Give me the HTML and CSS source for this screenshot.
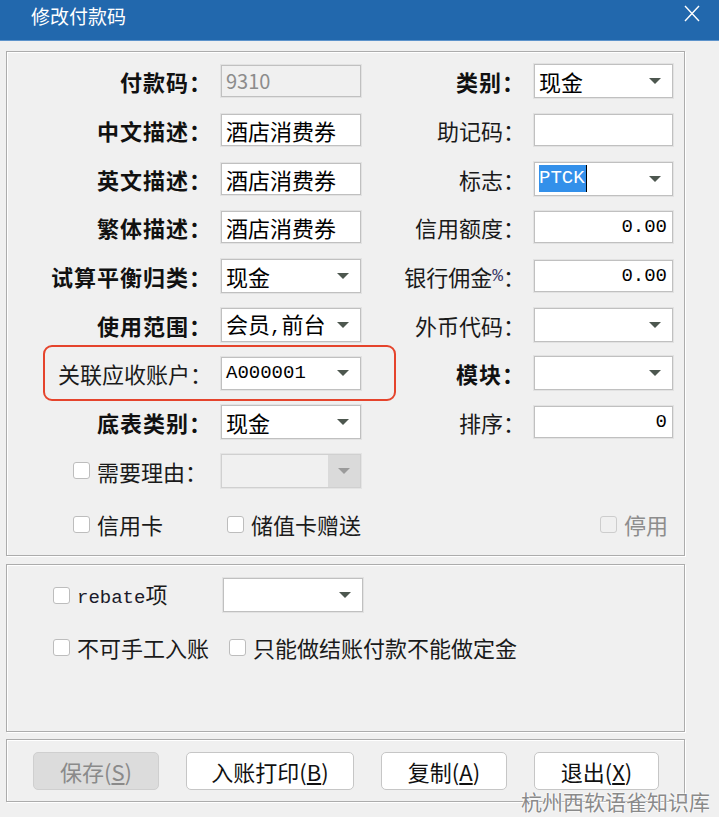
FILE: index.html
```html
<!DOCTYPE html>
<html lang="zh-CN">
<head>
<meta charset="utf-8">
<title>修改付款码</title>
<link rel="stylesheet" href="styles.css">
</head>
<body>
<div class="window">
  <div class="titlebar">
    <span class="title">修改付款码</span>
    <svg class="close" width="16" height="17" viewBox="0 0 16 17"><path d="M1 1 L15 16 M15 1 L1 16" stroke="#fff" stroke-width="1.4" fill="none"/></svg>
  </div>
  <div class="content">
    <section class="group main">
      <div class="label b">付款码：</div>
      <div class="field input disabled"><span class="num">9310</span></div>
      <div class="label b">类别：</div>
      <div class="field select tall"><span>现金</span><i class="arrow"></i></div>

      <div class="label b">中文描述：</div>
      <div class="field input"><span>酒店消费券</span></div>
      <div class="label">助记码：</div>
      <div class="field input"></div>

      <div class="label b">英文描述：</div>
      <div class="field input"><span>酒店消费券</span></div>
      <div class="label">标志：</div>
      <div class="field select tall"><span class="mono sel">PTCK</span><span class="caret"></span><i class="arrow"></i></div>

      <div class="label b">繁体描述：</div>
      <div class="field input"><span>酒店消费券</span></div>
      <div class="label">信用额度：</div>
      <div class="field input right"><span class="mono">0.00</span></div>

      <div class="label b">试算平衡归类：</div>
      <div class="field select tall"><span>现金</span><i class="arrow"></i></div>
      <div class="label">银行佣金<span class="pct">%</span>：</div>
      <div class="field input right"><span class="mono">0.00</span></div>

      <div class="label b">使用范围：</div>
      <div class="field select tall"><span>会员<span class="mono">,</span>前台</span><i class="arrow"></i></div>
      <div class="label">外币代码：</div>
      <div class="field select tall"><span></span><i class="arrow"></i></div>

      <div class="label">关联应收账户：</div>
      <div class="field select"><span class="mono">A000001</span><i class="arrow"></i></div>
      <div class="label b">模块：</div>
      <div class="field select tall"><span></span><i class="arrow"></i></div>

      <div class="label b">底表类别：</div>
      <div class="field select tall"><span>现金</span><i class="arrow"></i></div>
      <div class="label">排序：</div>
      <div class="field input right"><span class="mono">0</span></div>

      <div class="label cbl"><span class="cb"></span><span>需要理由：</span></div>
      <div class="field select tall off"><span></span><span class="dbtn"><i class="arrow"></i></span></div>
      <div></div>
      <div></div>

      <div class="checks">
        <label class="check"><span class="cb"></span><span>信用卡</span></label>
        <label class="check"><span class="cb"></span><span>储值卡赠送</span></label>
        <label class="check dim"><span class="cb"></span><span>停用</span></label>
      </div>

      <div class="highlight"></div>
    </section>

    <section class="group options">
      <div class="orow">
        <label class="check w170"><span class="cb"></span><span><span class="mono">rebate</span>项</span></label>
        <div class="field select tall w140"><span></span><i class="arrow"></i></div>
      </div>
      <div class="orow second">
        <label class="check w176"><span class="cb"></span><span>不可手工入账</span></label>
        <label class="check"><span class="cb"></span><span>只能做结账付款不能做定金</span></label>
      </div>
    </section>

    <section class="group actions">
      <button class="btn w126 disabled">保存(<u>S</u>)</button>
      <button class="btn w168">入账打印(<u>B</u>)</button>
      <button class="btn w126">复制(<u>A</u>)</button>
      <button class="btn w125">退出(<u>X</u>)</button>
    </section>
  </div>
  <div class="watermark">杭州西软语雀知识库</div>
</div>
</body>
</html>
```

FILE: styles.css
```css
html, body {
  margin: 0;
  padding: 0;
  background: #f0f0f0;
  font-family: "Noto Sans CJK SC", "Noto Sans", sans-serif;
  color: #111;
}

.window {
  position: relative;
  width: 719px;
  height: 817px;
  overflow: hidden;
  background: #f0f0f0;
}

.titlebar {
  display: flex;
  align-items: flex-start;
  height: 41px;
  box-sizing: border-box;
  padding-left: 31px;
  background: #2268ad;
  border-bottom: 1px solid #5d93cb;
}

.title {
  margin-top: 6px;
  font-size: 19px;
  line-height: 19px;
  color: #fff;
}

.close {
  margin-left: auto;
  margin-right: 19px;
  margin-top: 5px;
}

.content {
  padding: 10px 34px 0 6px;
}

.group {
  position: relative;
  border: 1px solid #acacac;
  box-shadow: inset 1px 1px 0 #fff, 1px 1px 0 #fff;
}

/* ---------- main panel ---------- */
.main {
  display: grid;
  grid-template-columns: 214px 140px 173px 139px;
  grid-template-rows: repeat(9, 48.7px) 58px;
  padding: 5px 11px 2px 0;
}

.label {
  display: flex;
  align-items: center;
  justify-content: flex-end;
  padding-right: 9px;
  font-size: 22px;
  line-height: 1;
  white-space: nowrap;
  color: #1a1a1a;
}

.label.b {
  font-weight: 700;
  letter-spacing: 1px;
  color: #111;
}

.label .pct {
  font-family: "Liberation Mono", monospace;
  font-size: 18px;
  color: #3a3a6a;
}

.label.cbl {
  justify-content: flex-start;
  padding-left: 66px;
  gap: 7px;
}

.field {
  align-self: center;
  display: flex;
  align-items: center;
  box-sizing: border-box;
  height: 32px;
  padding: 0 4px;
  background: #fff;
  border: 1px solid #c0c0c0;
  box-shadow: 0 0 0 1px #e2e2e2;
  font-size: 22px;
  line-height: 1;
  color: #000;
  white-space: nowrap;
}

.field.tall {
  height: 34px;
}

.field.select {
  height: 33px;
}

.field.select.tall {
  height: 34px;
}

.field.right {
  justify-content: flex-end;
  padding-right: 5px;
}

.field.disabled {
  background: #f0f0f0;
}

.field.disabled .num {
  font-size: 20px;
  color: #8c8c8c;
}

.mono {
  font-family: "Liberation Mono", monospace;
  font-size: 19px;
}

.sel {
  display: inline-block;
  line-height: 27px;
  padding: 0 1px 0 0;
  background: #3390ea;
  color: #fff;
}

.caret {
  display: inline-block;
  width: 1px;
  height: 27px;
  background: #000;
}

.arrow {
  display: block;
  width: 0;
  height: 0;
  margin-left: auto;
  margin-right: 7px;
  border-left: 6px solid transparent;
  border-right: 6px solid transparent;
  border-top: 6px solid #4d574f;
}

.field.off {
  background: #f0f0f0;
  border-color: #d0d0d0;
  box-shadow: 0 0 0 1px #e4e4e4;
  padding-right: 0;
}

.dbtn {
  display: flex;
  align-items: center;
  justify-content: center;
  width: 32px;
  height: 100%;
  margin-left: auto;
  background: #dadada;
}

.dbtn .arrow {
  margin: 0;
  border-top-color: #9b9b9b;
}

.cb {
  display: inline-block;
  flex: none;
  width: 17px;
  height: 17px;
  box-sizing: border-box;
  background: #fff;
  border: 1px solid #bdbdbd;
  border-radius: 3px;
}

.check {
  display: flex;
  align-items: center;
  gap: 7px;
  font-size: 22px;
  line-height: 1;
  color: #1a1a1a;
  white-space: nowrap;
}

.check.dim {
  color: #8d8d8d;
}

.check.dim .cb {
  background: #f0f0f0;
  border-color: #cdcdcd;
}

.checks {
  grid-column: 1 / -1;
  display: grid;
  grid-template-columns: 154px 373px auto;
  align-items: center;
  padding-left: 66px;
}

.highlight {
  position: absolute;
  left: 36px;
  top: 293px;
  width: 349px;
  height: 52px;
  border: 2px solid #e5442c;
  border-radius: 9px;
  pointer-events: none;
}

/* ---------- options panel ---------- */
.options {
  margin-top: 8px;
  height: 168px;
  box-sizing: border-box;
  padding: 13px 0 0 46px;
}

.orow {
  display: flex;
  align-items: center;
  height: 34px;
}

.orow.second {
  margin-top: 18px;
}

.orow .mono {
  font-size: 19px;
  color: #1a1a2a;
}

.w170 { width: 170px; }
.w176 { width: 176px; }
.w140 { width: 140px; }

/* ---------- actions panel ---------- */
.actions {
  margin-top: 7px;
  height: 63px;
  box-sizing: border-box;
  display: flex;
  align-items: center;
  gap: 27px;
  padding-left: 26px;
}

.btn {
  height: 38px;
  box-sizing: border-box;
  padding: 0;
  background: #fff;
  border: 1px solid #c6c6c6;
  border-radius: 5px;
  font-family: "Noto Sans CJK SC", "Noto Sans", sans-serif;
  font-size: 22px;
  line-height: 1;
  color: #111;
}

.btn u {
  text-underline-offset: 2px;
}

.btn.disabled {
  background: #dcdcdc;
  border-color: #cfcfcf;
  color: #8a8a8a;
}

.w125 { width: 125px; }
.w126 { width: 126px; }
.w168 { width: 168px; }

.watermark {
  position: absolute;
  left: 521px;
  top: 787px;
  font-size: 21px;
  line-height: 28px;
  color: #8a8a8a;
  text-shadow: 0 0 2px #fff, 0 0 2px #fff, 0 0 1px #fff;
  white-space: nowrap;
}
```
